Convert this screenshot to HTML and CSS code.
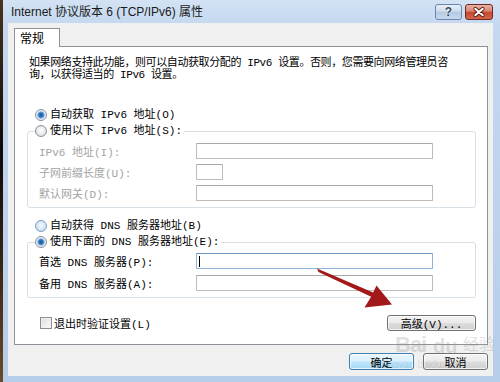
FILE: index.html
```html
<!DOCTYPE html>
<html lang="zh-CN">
<head>
<meta charset="utf-8">
<title>Internet 协议版本 6 (TCP/IPv6) 属性</title>
<link rel="stylesheet" href="styles.css">
</head>
<body>
<div class="desk">
  <div class="desk-edge"></div>
  <div class="window">
    <div class="titlebar">
      <span class="title">Internet 协议版本 6 (TCP/IPv6) 属性</span>
      <div class="tb-btns">
        <span class="tb help">?</span>
        <span class="tb close">
          <svg width="28" height="16" viewBox="0 0 28 16">
            <path d="M10 4.5 L18 11.5 M18 4.5 L10 11.5" stroke="#5a1a10" stroke-width="4" stroke-linecap="round"/>
            <path d="M10 4.5 L18 11.5 M18 4.5 L10 11.5" stroke="#ffffff" stroke-width="2.2" stroke-linecap="round"/>
          </svg>
        </span>
      </div>
    </div>
    <div class="client">
      <div class="tabs"><div class="tab">常规</div></div>
      <div class="panel">
        <p class="intro">如果网络支持此功能，则可以自动获取分配的 IPv6 设置。否则，您需要向网络管理员咨<br>询，以获得适当的 IPv6 设置。</p>

        <div class="radio-row first"><span class="radio checked"></span><span>自动获取 IPv6 地址(O)</span></div>
        <fieldset class="group">
          <legend><span class="radio-row"><span class="radio"></span><span>使用以下 IPv6 地址(S):</span></span></legend>
          <div class="fields">
            <div class="field disabled"><span class="lbl">IPv6 地址(I):</span><span class="input wide"></span></div>
            <div class="field disabled"><span class="lbl">子网前缀长度(U):</span><span class="input short"></span></div>
            <div class="field disabled"><span class="lbl">默认网关(D):</span><span class="input wide"></span></div>
          </div>
        </fieldset>

        <div class="radio-row dns"><span class="radio blue"></span><span>自动获得 DNS 服务器地址(B)</span></div>
        <fieldset class="group g2">
          <legend><span class="radio-row"><span class="radio checked"></span><span>使用下面的 DNS 服务器地址(E):</span></span></legend>
          <div class="fields f2">
            <div class="field"><span class="lbl">首选 DNS 服务器(P):</span><span class="input wide focus"><span class="caret"></span></span></div>
            <div class="field"><span class="lbl">备用 DNS 服务器(A):</span><span class="input wide"></span></div>
          </div>
        </fieldset>

        <div class="bottom-row">
          <span class="check"></span><span class="check-lbl">退出时验证设置(L)</span>
          <span class="btn adv">高级(V)...</span>
        </div>
      </div>
      <div class="footer">
        <span class="btn ok">确定</span>
        <span class="btn">取消</span>
      </div>
    </div>
  </div>

  <div class="watermark"><span class="wm-bai">Bai</span><span class="wm-du">du</span><span class="wm-jy">经验</span><span class="wm-url">jingyan.baidu.com</span></div>

  <svg class="arrow" width="500" height="382" viewBox="0 0 500 382">
    <polygon points="317,268.5 318.5,272 377,299.5 379,295" fill="#a3191a"/>
    <polygon points="392,304.5 376.5,285.5 371,297 364.5,307.5" fill="#a3191a"/>
  </svg>
</div>
</body>
</html>
```
FILE: styles.css
```css
* { box-sizing: border-box; }

body {
  margin: 0;
  width: 500px;
  height: 382px;
  overflow: hidden;
  background: #1b1410;
  font-family: "Liberation Mono", "Noto Sans CJK SC", monospace;
  font-size: 11px;
  color: #000;
}

.desk {
  position: relative;
  width: 500px;
  height: 382px;
  display: flex;
}

.desk-edge {
  width: 3px;
  background: linear-gradient(#4a3220, #0d0a08 40%, #3a2616 70%, #6b4a2a);
}

.window {
  flex: 1;
  display: flex;
  flex-direction: column;
  background: linear-gradient(#d3e2f4, #c4d8ef 25px, #bcd2ec 60%, #b6cdea);
  padding: 0 7px 6px 5px;
}

.titlebar {
  height: 23px;
  display: flex;
  align-items: center;
}

.title {
  font-family: "Liberation Sans", "Noto Sans CJK SC", sans-serif;
  font-size: 12px;
  color: #1a1a1a;
  padding-left: 3px;
  padding-bottom: 2px;
}

.tb-btns {
  margin-left: auto;
  align-self: flex-start;
  margin-top: 4px;
  display: flex;
  gap: 3px;
}

.tb {
  height: 16px;
  border-radius: 3px;
  display: flex;
  align-items: center;
  justify-content: center;
}

.help {
  width: 27px;
  border: 1px solid #6d87a8;
  background: linear-gradient(#e6eef8, #cfdcee 45%, #b3c8e2 50%, #c8daee);
  font-family: "Liberation Sans", sans-serif;
  font-weight: bold;
  font-size: 12px;
  color: #3b4d66;
  text-shadow: 0 0 2px #fff;
}

.close {
  width: 28px;
  border: 1px solid #6e2a20;
  background: linear-gradient(#eab2a6, #d98471 45%, #c7452c 50%, #d2664c);
}

.client {
  flex: 1;
  background: #f0f0f0;
  padding: 5px 5px 6px 6px;
  display: flex;
  flex-direction: column;
}

.tabs { display: flex; }

.tab {
  width: 46px;
  height: 19px;
  margin-bottom: -1px;
  background: #fff;
  border: 1px solid #8e9197;
  border-bottom: none;
  position: relative;
  z-index: 1;
  font-family: "Noto Sans CJK SC", sans-serif;
  font-size: 12px;
  line-height: 17px;
  padding-left: 5px;
}

.panel {
  flex: 1;
  background: #fff;
  border: 1px solid #8e9197;
  padding: 10px 11px 11px 12px;
  display: flex;
  flex-direction: column;
}

.intro {
  margin: 0;
  padding-left: 2px;
  line-height: 12px;
  white-space: nowrap;
  letter-spacing: -0.4px;
}

.radio-row {
  display: flex;
  align-items: center;
  gap: 3px;
  height: 16px;
  line-height: 16px;
}

.radio-row.first { margin-top: 26px; padding-left: 8px; }
.radio-row.dns { margin-top: 10px; padding-left: 8px; }

.radio {
  width: 12px;
  height: 12px;
  flex: none;
  border-radius: 50%;
  border: 1px solid #8a9199;
  background: radial-gradient(circle at 50% 45%, #ffffff 0, #e9edf1 50%, #cdd3d9 100%);
}

.radio.blue {
  border-color: #7c9fc4;
  background: radial-gradient(circle at 50% 45%, #f4f9fe 0, #d5e6f6 55%, #a9c6e4 100%);
}

.radio.checked {
  background: radial-gradient(circle, #1a5a9c 0, #2b73b9 2px, #7fb2e2 3.3px, #e4ecf4 4px, #f4f6f8 100%);
}

.group {
  margin: 0;
  border: 1px solid #d5dfe5;
  border-radius: 3px;
  padding: 4px 0 6px 7px;
  min-width: 0;
}

.group.g2 { padding-top: 3px; }

.group legend {
  padding: 0 2px 0 0;
  margin: 0;
}

.fields {
  display: flex;
  flex-direction: column;
  gap: 5px;
  padding-left: 4px;
}

.fields.f2 { gap: 6px; }

.field {
  display: flex;
  align-items: center;
  height: 16px;
}

.field.disabled .lbl { color: #a3a3a3; }

.lbl {
  width: 157px;
  flex: none;
}

.input {
  height: 16px;
  background: #fff;
  border: 1px solid #bcbcbc;
  border-top-color: #a9a9a9;
  border-radius: 1px;
  display: flex;
  align-items: center;
}

.input.wide { width: 237px; }
.input.short { width: 27px; }

.input.focus {
  border-color: #8fb4da;
  border-top-color: #6e97c4;
}

.caret {
  width: 1px;
  height: 11px;
  margin-left: 2px;
  background: #000;
}

.bottom-row {
  margin-top: 17px;
  display: flex;
  align-items: center;
  height: 16px;
  padding-left: 13px;
}

.check {
  width: 12px;
  height: 12px;
  border: 1px solid #8e8f8f;
  background: linear-gradient(135deg, #d7d9db, #f4f4f4 70%, #fdfdfd);
  box-shadow: inset 0 0 0 1px #f0f0f0;
}

.check-lbl { margin-left: 2px; }

.btn {
  height: 17px;
  width: 65px;
  border: 1px solid #707070;
  border-radius: 3px;
  background: linear-gradient(#f3f3f3, #ebebeb 48%, #dddddd 52%, #d0d0d0);
  display: flex;
  align-items: center;
  justify-content: center;
  font-size: 11px;
  box-shadow: inset 0 0 0 1px rgba(255, 255, 255, 0.7);
}

.btn.adv {
  margin-left: auto;
  width: 89px;
  height: 16px;
}

.footer {
  margin-top: 8px;
  display: flex;
  justify-content: flex-end;
  gap: 9px;
}

.btn.ok {
  border-color: #3c7fb1;
  background: linear-gradient(#eaf6fd, #d9f0fc 48%, #bee6fd 52%, #a7d9f5);
}

.watermark {
  position: absolute;
  left: 395px;
  top: 334px;
  width: 105px;
  height: 48px;
  pointer-events: none;
  color: rgba(150, 150, 150, 0.3);
  font-family: "Liberation Sans", "Noto Sans CJK SC", sans-serif;
  line-height: 1;
}

.wm-bai {
  position: absolute;
  left: 0;
  top: 0;
  font-size: 22px;
  font-weight: bold;
  letter-spacing: -1px;
}

.wm-du {
  position: absolute;
  left: 38px;
  top: 2px;
  font-size: 20px;
  font-weight: bold;
}

.wm-jy {
  position: absolute;
  left: 68px;
  top: 3px;
  font-size: 16px;
}

.wm-url {
  position: absolute;
  left: -12px;
  top: 26px;
  font-size: 10px;
  color: rgba(150, 150, 150, 0.22);
}

.arrow {
  position: absolute;
  left: 0;
  top: 0;
  pointer-events: none;
}
```
